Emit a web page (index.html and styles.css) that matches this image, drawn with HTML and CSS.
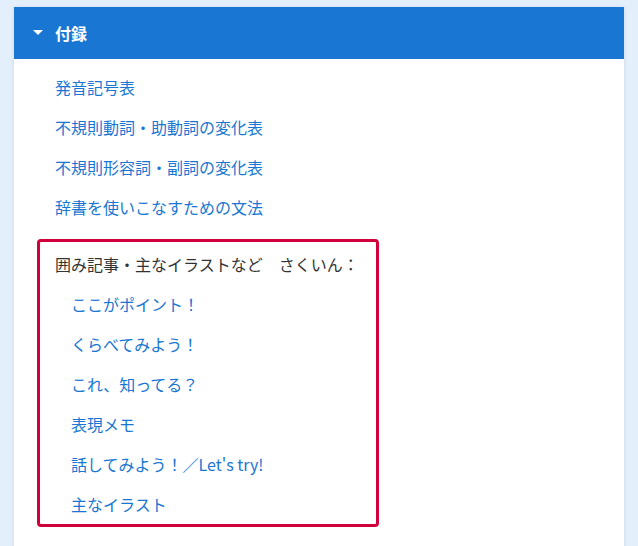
FILE: index.html
```html
<!DOCTYPE html>
<html lang="ja">
<head>
    <meta charset="UTF-8">
    <meta name="viewport" content="width=device-width, initial-scale=1.0">
    <title>付録</title>
    <link rel="stylesheet" href="styles.css">
</head>
<body>
    <div class="panel">
        <div class="panel-header">
            <span class="caret"></span>
            <span class="panel-title">付録</span>
        </div>
        <div class="panel-body">
            <ul class="link-list">
                <li><a href="#">発音記号表</a></li>
                <li><a href="#">不規則動詞・助動詞の変化表</a></li>
                <li><a href="#">不規則形容詞・副詞の変化表</a></li>
                <li><a href="#">辞書を使いこなすための文法</a></li>
            </ul>
            <div class="index-box">
                <p class="index-title">囲み記事・主なイラストなど　さくいん：</p>
                <ul class="link-list sub-list">
                    <li><a href="#">ここがポイント！</a></li>
                    <li><a href="#">くらべてみよう！</a></li>
                    <li><a href="#">これ、知ってる？</a></li>
                    <li><a href="#">表現メモ</a></li>
                    <li><a href="#">話してみよう！／Let's try!</a></li>
                    <li><a href="#">主なイラスト</a></li>
                </ul>
            </div>
        </div>
    </div>
</body>
</html>
```

FILE: styles.css
```css
/* 全体 */
body {
    margin: 0;
    padding: 7px 14px 0;
    background-color: #e3f0fb;
    font-family: "Noto Sans CJK JP", "Noto Sans", sans-serif;
    font-size: 16px;
    color: #333333;
}

.panel {
    background-color: #ffffff;
    box-shadow: 0 1px 4px rgba(0, 0, 0, 0.12);
    min-height: 560px;
}

/* 見出し */
.panel-header {
    display: flex;
    align-items: center;
    height: 52px;
    padding-left: 19px;
    box-sizing: border-box;
    padding-bottom: 1px;
    background-color: #1976d2;
    color: #ffffff;
}

.caret {
    width: 0;
    height: 0;
    border-left: 5px solid transparent;
    border-right: 5px solid transparent;
    border-top: 5px solid #ffffff;
    margin-right: 12px;
}

.panel-title {
    font-weight: bold;
    font-size: 16px;
}

/* リンク一覧 */
.panel-body {
    padding: 8px 0 0 23px;
}

.link-list {
    list-style: none;
    margin: 0;
    padding: 0 0 0 18px;
}

.link-list li {
    height: 40px;
    line-height: 40px;
}

.link-list a {
    color: #1976d2;
    text-decoration: none;
}

/* さくいん枠 */
.index-box {
    width: 336px;
    margin-top: 12px;
    padding-top: 2px;
    border: 3px solid #d0003c;
    border-radius: 4px;
}

.index-title {
    margin: 0;
    padding-left: 15px;
    line-height: 40px;
}

.sub-list {
    padding-left: 31px;
}
```
